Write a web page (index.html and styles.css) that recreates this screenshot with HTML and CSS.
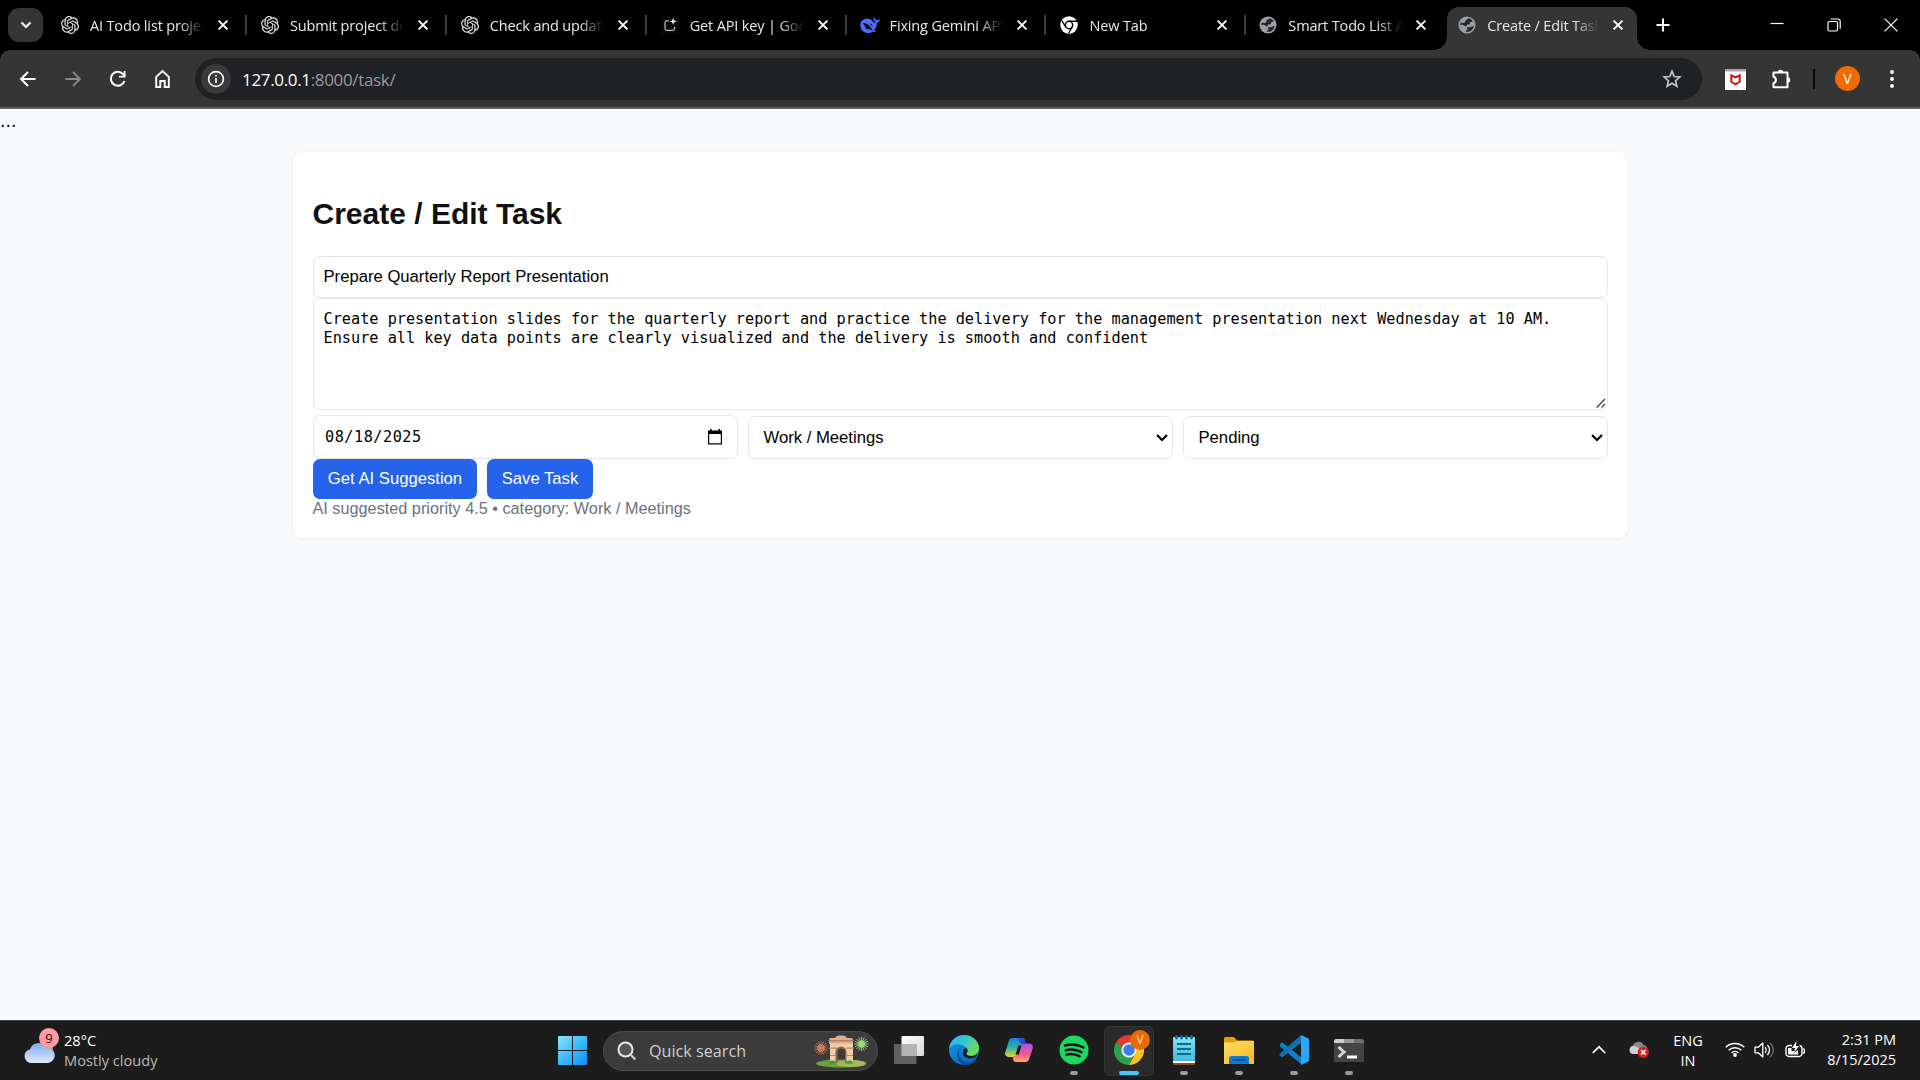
FILE: index.html
```html
<!DOCTYPE html>
<html lang="en">
<head>
<meta charset="utf-8">
<title>Create / Edit Task</title>
<link rel="stylesheet" href="styles.css">
</head>
<body>
<svg class="defs" width="0" height="0">
  <defs>
    <symbol id="knot" viewBox="0 0 24 24"><path fill="#e8e8e8" d="M22.28 9.82a5.98 5.98 0 0 0-.52-4.91 6.05 6.05 0 0 0-6.51-2.9A6.07 6.07 0 0 0 4.98 4.18a5.98 5.98 0 0 0-4 2.9 6.05 6.05 0 0 0 .74 7.1 5.98 5.98 0 0 0 .51 4.91 6.05 6.05 0 0 0 6.52 2.9A5.98 5.98 0 0 0 13.26 24a6.06 6.06 0 0 0 5.77-4.21 5.99 5.99 0 0 0 4-2.9 6.06 6.06 0 0 0-.75-7.07zm-9.02 12.61a4.48 4.48 0 0 1-2.88-1.04l.14-.08 4.78-2.76a.8.8 0 0 0 .39-.68v-6.74l2.02 1.17a.07.07 0 0 1 .04.05v5.58a4.5 4.5 0 0 1-4.49 4.5zM3.6 18.3a4.47 4.47 0 0 1-.54-3.01l.14.09 4.78 2.76a.77.77 0 0 0 .78 0l5.84-3.37v2.33a.08.08 0 0 1-.03.06L9.74 19.95a4.5 4.5 0 0 1-6.14-1.65zM2.34 7.9a4.49 4.49 0 0 1 2.37-1.98v5.68a.77.77 0 0 0 .39.68l5.81 3.35-2.02 1.17a.08.08 0 0 1-.07 0l-4.83-2.79A4.5 4.5 0 0 1 2.34 7.87zm16.6 3.86-5.84-3.39L15.12 7.2a.08.08 0 0 1 .07 0l4.83 2.79a4.49 4.49 0 0 1-.68 8.1v-5.68a.79.79 0 0 0-.4-.65zm2.01-3.03-.14-.08-4.77-2.78a.78.78 0 0 0-.79 0L9.41 9.23V6.9a.07.07 0 0 1 .03-.06l4.83-2.79a4.5 4.5 0 0 1 6.68 4.66zM8.31 12.86l-2.02-1.16a.08.08 0 0 1-.04-.06V6.07a4.5 4.5 0 0 1 7.38-3.45l-.15.08L8.7 5.46a.8.8 0 0 0-.39.68zm1.1-2.36 2.6-1.5 2.6 1.5v3l-2.6 1.5-2.6-1.5z"/></symbol>
    <symbol id="close" viewBox="0 0 12 12"><path d="M1.6 1.6l8.8 8.8M10.4 1.6l-8.8 8.8" stroke="#fff" stroke-width="1.9" fill="none"/></symbol>
    <symbol id="globe" viewBox="0 0 20 20"><circle cx="10" cy="10" r="9.500" fill="#9aa0a6"/><path fill="#26282a" d="M11.500 2.600c2 .3 3.800 1.500 4.900 3.200-.9.900-1.900.4-2.600 1-.8.700.1 1.600-.9 2.300-.8.500-1.700-.1-2.500.3-.9.500-.2 1.500-1 1.900-1 .5-2.100-.7-3.500-1.300C4.600 9.400 3.500 9.600 2.300 10c.1-1 .3-1.900.7-2.700 1.500.2 2.700.7 3.900.2 1.400-.6.700-2 1.700-2.900.9-.8 2.300-.7 2.900-2zM10.200 12.300c1.300-.4 1.900.4 3 .3 1.500-.2 1.900-1.600 4.400-1.500-.4 3-2.700 5.600-5.700 6.400-1.200.2-2.400.2-3.500-.2.300-1.300 1.500-1 2-2 .4-1-.6-1.900-.2-3z"/></symbol>
    <symbol id="caret" viewBox="0 0 14 10"><path d="M2 2l5 5 5-5" fill="none" stroke="#000" stroke-width="2.200"/></symbol>
    <linearGradient id="win" x1="0" y1="0" x2="1" y2="1"><stop offset="0" stop-color="#8be6ff"/><stop offset=".5" stop-color="#3cbcfb"/><stop offset="1" stop-color="#0c8ef5"/></linearGradient>
    <linearGradient id="cloud" x1="0" y1="0" x2="0" y2="1"><stop offset="0" stop-color="#7fa9ee"/><stop offset="1" stop-color="#e0ebfb"/></linearGradient>
    <linearGradient id="edgeA" x1="0" y1="0" x2="1" y2=".6"><stop offset="0" stop-color="#2fb0ee"/><stop offset=".5" stop-color="#35c4d4"/><stop offset="1" stop-color="#6fe052"/></linearGradient>
    <linearGradient id="edgeB" x1="0" y1="0" x2="1" y2="1"><stop offset="0" stop-color="#1797e8"/><stop offset="1" stop-color="#0a5ab4"/></linearGradient>
    <linearGradient id="copA" x1="0" y1="0" x2="0" y2="1"><stop offset="0" stop-color="#1b7fe6"/><stop offset=".5" stop-color="#27b6a4"/><stop offset="1" stop-color="#f2d428"/></linearGradient>
    <linearGradient id="copB" x1="0" y1="0" x2="0" y2="1"><stop offset="0" stop-color="#a453ee"/><stop offset=".6" stop-color="#ee5b8d"/><stop offset="1" stop-color="#ffae68"/></linearGradient>
    <linearGradient id="pad" x1="0" y1="0" x2="0" y2="1"><stop offset="0" stop-color="#86e2f2"/><stop offset="1" stop-color="#3fb3d6"/></linearGradient>
    <linearGradient id="fold" x1="0" y1="0" x2="1" y2="1"><stop offset="0" stop-color="#ffdc6a"/><stop offset="1" stop-color="#f8ba17"/></linearGradient>
    <linearGradient id="tv" x1="0" y1="0" x2="1" y2="1"><stop offset="0" stop-color="#fff"/><stop offset="1" stop-color="#d8d8d8"/></linearGradient>
  </defs>
</svg>

<header class="tabstrip">
  <button class="tab-search"><svg width="14" height="10" viewBox="0 0 14 10"><path d="M2.500 2.500L7 7l4.500-4.500" fill="none" stroke="#fff" stroke-width="2.200"/></svg></button>
  <nav class="tabs">
    <div class="tab"><svg class="fav"><use href="#knot"/></svg><span class="label">AI Todo list project</span><svg class="x"><use href="#close"/></svg></div>
    <div class="tab"><svg class="fav"><use href="#knot"/></svg><span class="label">Submit project details</span><svg class="x"><use href="#close"/></svg></div>
    <div class="tab"><svg class="fav"><use href="#knot"/></svg><span class="label">Check and update</span><svg class="x"><use href="#close"/></svg></div>
    <div class="tab"><svg class="fav" viewBox="0 0 20 20"><rect width="20" height="20" fill="#080808"/><path d="M9 5.500H6.500a2 2 0 0 0-2 2V14a2 2 0 0 0 2 2H13a2 2 0 0 0 2-2v-2" fill="none" stroke="#bbb" stroke-width="1.400"/><path d="M13.500 2l1 3 3 1-3 1-1 3-1-3-3-1 3-1z" fill="#fff"/></svg><span class="label">Get API key | Google</span><svg class="x"><use href="#close"/></svg></div>
    <div class="tab"><svg class="fav whale" viewBox="0 0 20 20"><path fill="#4d6bfe" d="M19.700 4c-1.300.5-1.700 1.300-3.200 1C15 4.500 14.800 2.600 13.500 2c-.3 2 .3 3.500 1.300 4.500.6.600.3 1.500.1 2.100-1.700-1.200-2.500-3.700-5-4.400C5.500 3 .7 5 .3 9.500c-.4 4.800 3.500 8.600 8 8.500 2 0 3.500-.5 4.700-1.500.8.500 2.200.6 3 .1-.5-.5-1.200-.7-1.700-1.400 2-2.400 2.200-4.500 2.400-7.200 2-.6 3.100-2 3-4z"/><path fill="#000" d="M3 8c3-.4 6 2 7.500 4.500.8 1.200 1.500 1.800 2.200 2.200-1.700.6-3-.1-3.800-1.100-.5.800-1.400.8-2 .3C5 12.500 4.600 9.800 3 8zm7 .8c1.300-.4 2.700.7 2.600 2.300-1-.2-1.900-1.200-2.600-2.300z"/></svg><span class="label">Fixing Gemini API</span><svg class="x"><use href="#close"/></svg></div>
    <div class="tab"><svg class="fav" viewBox="0 0 20 20"><circle cx="10" cy="10" r="9.700" fill="#fff"/><circle cx="10" cy="10" r="4.900" fill="#000"/><circle cx="10" cy="10" r="3.200" fill="#fff"/><path d="M10 5.800h9M6.300 12.200L2 5M13.600 12.200L9.500 19.200" stroke="#000" stroke-width="1.500"/></svg><span class="label">New Tab</span><svg class="x"><use href="#close"/></svg></div>
    <div class="tab"><svg class="fav"><use href="#globe"/></svg><span class="label">Smart Todo List App</span><svg class="x"><use href="#close"/></svg></div>
    <div class="tab active"><svg class="fav"><use href="#globe"/></svg><span class="label">Create / Edit Task</span><svg class="x"><use href="#close"/></svg></div>
  </nav>
  <svg class="newtab" width="14" height="14" viewBox="0 0 14 14"><path d="M7 .5v13M.5 7h13" stroke="#fff" stroke-width="2"/></svg>
  <div class="winctl">
    <svg width="14" height="14" viewBox="0 0 14 14"><path d="M.5 5.500h13" stroke="#fff" stroke-width="1.200"/></svg>
    <svg width="14" height="14" viewBox="0 0 14 14"><rect x="1" y="3.500" width="9.500" height="9.500" rx="1.500" fill="none" stroke="#fff" stroke-width="1.200"/><path d="M3.500 1h7.500a2.200 2.200 0 0 1 2.200 2.200v7.500" fill="none" stroke="#fff" stroke-width="1.200"/></svg>
    <svg width="14" height="14" viewBox="0 0 14 14"><path d="M.6.6l12.800 12.800M13.400.6L.6 13.400" stroke="#fff" stroke-width="1.200"/></svg>
  </div>
</header>

<div class="toolbar-wrap">
<div class="toolbar">
  <div class="navicons">
    <svg viewBox="0 0 20 20"><path d="M17.500 10H3.200M10 3L3 10l7 7" fill="none" stroke="#fff" stroke-width="2"/></svg>
    <svg viewBox="0 0 20 20"><path d="M2.500 10h14.300M10 3l7 7-7 7" fill="none" stroke="#8a8a8a" stroke-width="1.800"/></svg>
    <svg viewBox="0 0 20 20"><path d="M16.500 12A7 7 0 1 1 15 5l2 2" fill="none" stroke="#fff" stroke-width="2"/><path d="M17.500 2v6.500H11V6.700h4.700V2z" fill="#fff"/></svg>
    <svg viewBox="0 0 20 20"><path d="M3.200 18V7.800L9.500 2l6.300 5.800V18H11.700v-6H7.300v6z" fill="none" stroke="#fff" stroke-width="1.900"/></svg>
  </div>
  <div class="omnibox">
    <span class="info"><svg width="18" height="18" viewBox="0 0 18 18"><circle cx="9" cy="9" r="7.400" fill="none" stroke="#fff" stroke-width="1.600"/><path d="M9 8v5M9 4.800v1.700" stroke="#fff" stroke-width="1.600"/></svg></span>
    <span class="url">127.0.0.1<span class="path">:8000/task/</span></span>
    <svg class="star" width="20" height="20" viewBox="0 0 20 20"><path d="M10 2.200l2.200 5.300 5.700.5-4.300 3.700 1.300 5.600L10 14.300l-4.900 3 1.300-5.600L2.100 8l5.700-.5z" fill="none" stroke="#c4c6c8" stroke-width="1.700"/></svg>
  </div>
  <svg class="shield" width="21" height="21" viewBox="0 0 21 21"><path d="M0 0h21v21H0z" fill="#fff"/><path d="M0 0h21v2.500H0z" fill="#a9a4a4"/><path d="M6.300 6.300l4.200 2 4.200-2v6.500l-4.200 2.600-4.200-2.600z" fill="none" stroke="#c01818" stroke-width="2"/></svg>
  <svg class="puzzle" width="24" height="24" viewBox="0 0 24 24"><path d="M4.500 5.500h14v14.800h-14v-4a3.400 3.400 0 0 0 0-6.500z" fill="none" stroke="#fff" stroke-width="2" stroke-linejoin="round"/><path d="M8.800 5.500a2.700 2.700 0 0 1 5.400 0zM18.500 10.300a2.700 2.700 0 0 1 0 5.400z" fill="#fff"/></svg>
  <span class="vbar"></span>
  <span class="avatar">V</span>
  <svg class="dots" width="4" height="18" viewBox="0 0 4 18"><path d="M2 2h0M2 9h0M2 16h0" stroke="#fff" stroke-width="3.800" stroke-linecap="round"/></svg>
</div>
</div>

<main class="page">
  <div class="stray">...</div>
  <section class="card">
    <h1>Create / Edit Task</h1>
    <input class="field title" value="Prepare Quarterly Report Presentation">
    <div class="area-wrap">
      <textarea class="field area" spellcheck="false">Create presentation slides for the quarterly report and practice the delivery for the management presentation next Wednesday at 10 AM.
Ensure all key data points are clearly visualized and the delivery is smooth and confident</textarea>
      <svg class="grip" width="10" height="10" viewBox="0 0 10 10"><path d="M.7 9.500L9 1M5.500 9.500L9 6" stroke="#444" stroke-width="1.300"/></svg>
    </div>
    <div class="row">
      <div class="field date"><span>08/18/2025</span><svg width="14" height="16" viewBox="0 0 14 16"><path d="M0 1.500h2V0h1.600v1.500h6.800V0H12v1.500h2V15.500H0zM1.200 5v9.300h11.600V5z" fill="#000"/></svg></div>
      <div class="field select"><span>Work / Meetings</span><svg width="14" height="10"><use href="#caret"/></svg></div>
      <div class="field select"><span>Pending</span><svg width="14" height="10"><use href="#caret"/></svg></div>
    </div>
    <div class="actions"><button class="btn ai">Get AI Suggestion</button><button class="btn save">Save Task</button></div>
    <p class="hint">AI suggested priority 4.5 • category: Work / Meetings</p>
  </section>
</main>

<footer class="taskbar">
  <div class="weather">
    <div class="wicon">
      <svg width="34" height="36" viewBox="0 0 34 36"><circle cx="23" cy="20" r="6" fill="#f58220"/><path d="M7 35a7 7 0 0 1-1-13.800A8.800 8.800 0 0 1 22 19.500a7.800 7.800 0 0 1 2 15.500z" fill="url(#cloud)"/></svg>
      <span class="count">9</span>
    </div>
    <div class="wtext"><span>28°C</span><span class="dim">Mostly cloudy</span></div>
  </div>
  <div class="dock">
    <svg class="start" width="29" height="29" viewBox="0 0 29 29"><path d="M0 1a1 1 0 0 1 1-1h13v14H0zM15 0h13a1 1 0 0 1 1 1v13H15zM0 15h14v14H1a1 1 0 0 1-1-1zM15 15h14v13a1 1 0 0 1-1 1H15z" fill="url(#win)"/></svg>
    <div class="search">
      <svg width="20" height="20" viewBox="0 0 20 20"><circle cx="8.500" cy="8.500" r="7" fill="#555" stroke="#e8e8e8" stroke-width="2"/><path d="M13.500 13.500l4.800 5" stroke="#ccc" stroke-width="2.400"/></svg>
      <span>Quick search</span>
      <svg class="gate" width="56" height="34" viewBox="0 0 56 34">
        <ellipse cx="28" cy="29.500" rx="25" ry="4" fill="#6c9f3e"/><ellipse cx="38" cy="29.500" rx="15" ry="3.500" fill="#a4b955"/>
        <path d="M16 6l1-2h5c1-2 3-2.500 6-2.500S33 2 34 4h5l1 2v4H16z" fill="#d9b08c"/><path d="M15.500 6h25v1.500h-25z" fill="#b58560"/><path d="M17 9.500h23V29h-7V18a4.500 4.500 0 0 0-9 0v11h-7z" fill="#efcda8"/><path d="M16 13.500h8v1.300h-8zM33 13.500h8v1.300h-8zM17 21h6v1h-6zM34 21h6v1h-6z" fill="#b98c66"/><path d="M22.500 29V18a5.500 5.500 0 0 1 11 0v11H32V18.500a3.500 3.500 0 0 0-7.500 0V29z" fill="#8e6248"/>
        <path d="M15.500 29.500c1-4 7-4 8 0zM32.500 29.500c1-4 7-4 8 0z" fill="#3f9a33"/>
        <circle cx="8" cy="14" r="3.500" fill="#c87b58"/><path d="M8 7v14M1 14h14M3 9l10 10M13 9L3 19M5.300 7.500l5.400 13M10.700 7.500l-5.400 13M1.500 11.300l13 5.400M14.500 11.300l-13 5.400" stroke="#cd7c58" stroke-width=".9"/>
        <circle cx="48.500" cy="10" r="3.500" fill="#8fd36a"/><path d="M48.500 3v14M41.500 10h14M43.500 5l10 10M53.500 5l-10 10M45.800 3.500l5.400 13M51.200 3.500l-5.400 13M42 7.300l13 5.400M55 7.300l-13 5.400" stroke="#9bdc76" stroke-width=".9"/>
      </svg>
    </div>
    <div class="app"><svg width="30" height="28" viewBox="0 0 30 28"><rect x="7.500" width="22.500" height="20" rx="1" fill="url(#tv)"/><rect y="8" width="22.500" height="20" rx="1" fill="#6d6d6d" fill-opacity=".85"/><rect x="7.500" y="8" width="15" height="12" fill="#b4b4b4"/></svg></div>
    <div class="app"><svg width="30" height="30" viewBox="0 0 30 30"><circle cx="15" cy="15" r="15" fill="url(#edgeB)"/><path d="M0 14C1 5 8 0 15 0c9 0 15 6.500 15 13 0 5-4 8-8 8-3.500 0-5-1.600-4.400-2.800 1.400-1.600 1-3.800.2-5C15.500 9 3 7 0 14z" fill="url(#edgeA)"/><path d="M10 16c-1 6 4 12 11 11.500 3-.2 4.500-1.200 6.500-2.800C25 28 21 30 16 30 9 29 5 19 12.500 11.500 11 13 10.200 14 10 16z" fill="#0b4e9c"/><path d="M17.600 18.200c-.6 1.200.9 2.800 4.400 2.800 2 0 4.500-.6 6.300-2.500-.5 3-2.800 4.500-5.800 5-5 .6-9-2.500-8.500-6.500.1-2.200 1.500-3.700 3.500-4 1.200 1.500 1.500 3.600.1 5.200z" fill="#1d1d1d"/></svg></div>
    <div class="app"><svg width="28" height="26" viewBox="0 0 28 26"><path d="M8 1h9c2 0 2.500 1 3 3l.7 3c-4 0-5 1-6 4l-2 6c-.8 2-1.500 3-3.500 3H4c-3 0-4.500-2-3.700-5L3.500 5C4.200 2.500 5.500 1 8 1z" fill="url(#copA)"/><path d="M20 25h-9c-2 0-2.500-1-3-3l-.5-2.500c4 0 5-1 6-4l2-6c.8-2 1.500-3 3.500-3h5c3 0 4.500 2 3.700 5L24.500 21c-.7 2.500-2 4-4.500 4z" fill="url(#copB)"/><path d="M13 1h4c2 0 2.500 1 3 3l.7 3h-3C15 7 14 4 13 1z" fill="#2450d0"/><path d="M13.200 8.500h3.300l-2.700 9h-3.300z" fill="#1d1d1d"/></svg></div>
    <div class="app run"><svg width="30" height="30" viewBox="0 0 30 30"><circle cx="15" cy="15" r="14.500" fill="#1ed760"/><path d="M6 10.500c6-1.800 13-1.200 18.500 2M6.800 15.300c5.200-1.500 11-.9 15.700 1.900M7.500 19.600c4.500-1.200 9-.7 13 1.700" fill="none" stroke="#121212" stroke-width="2.500" stroke-linecap="round"/></svg></div>
    <div class="app current"><svg width="30" height="30" viewBox="0 0 30 30"><path d="M15 15L2 7.500A15 15 0 0 1 28 7.500H15z" fill="#e33b2e"/><path d="M15 15L2 7.500A15 15 0 0 0 15 30l6.500-11.200z" fill="#2da04c"/><path d="M15 15l6.500 3.700L15 30A15 15 0 0 0 28 7.500H15z" fill="#fcc31e"/><circle cx="15" cy="15" r="7.500" fill="#fff"/><circle cx="15" cy="15" r="5.800" fill="#3b7ded"/></svg><span class="badge">V</span></div>
    <div class="app run"><svg width="22" height="30" viewBox="0 0 22 30"><rect y="2" width="22" height="26" rx="1" fill="url(#pad)"/><path d="M0 26h22v2H0z" fill="#fff"/><path d="M0 28h22v2H0z" fill="#8f4a14"/><path d="M3.500 1.500v1.500M8.500 1.500v1.500M13.500 1.500v1.500M18.500 1.500v1.500" stroke="#0d6f96" stroke-width="2.800" stroke-linecap="round"/><path d="M4 9h14M4 14h14M4 19h14" stroke="#086b91" stroke-width="2"/></svg></div>
    <div class="app run"><svg width="30" height="27" viewBox="0 0 30 27"><path d="M0 1.500A1.500 1.500 0 0 1 1.500 0H10l3 3.500h15.500A1.500 1.500 0 0 1 30 5v7H0z" fill="#dfa008"/><path d="M0 5.500h10l3-1.500h17v23H0z" fill="url(#fold)"/><path d="M5 27v-5.500a2.500 2.500 0 0 1 2.500-2.500h15a2.500 2.500 0 0 1 2.500 2.500V27z" fill="#1379ce"/><path d="M8.500 23h13" stroke="#0a4c92" stroke-width="1.500"/></svg></div>
    <div class="app run"><svg width="30" height="30" viewBox="0 0 30 30"><path d="M1 9l2-1.700L22 22v7L1 11.500z" fill="#0b82cd"/><path d="M22 0v8L3 22.500 1 21c-.7-.8-.7-1.700 0-2.500z" fill="#1070b3"/><path d="M22 0l7 3.200a2 2 0 0 1 1 1.800v20a2 2 0 0 1-1 1.800L22 30z" fill="#2aa7f2"/></svg></div>
    <div class="app run"><svg width="30" height="23" viewBox="0 0 30 23"><rect width="30" height="23" rx="1.500" fill="#444"/><path d="M1.500 0H10v4H0V1.500z" fill="#ccc"/><path d="M10 0h10v4H10z" fill="#999"/><path d="M20 0h8.500L30 1.500V4H20z" fill="#707070"/><path d="M4.500 8l5.500 5-5.500 5" fill="none" stroke="#d8d8d8" stroke-width="3"/><path d="M13 18h10" stroke="#fff" stroke-width="3"/></svg></div>
  </div>
  <div class="tray">
    <svg class="up" width="14" height="9" viewBox="0 0 14 9"><path d="M.8 8L7 1.800 13.200 8" fill="none" stroke="#fff" stroke-width="1.700"/></svg>
    <svg class="drive" width="20" height="17" viewBox="0 0 20 17"><path d="M4 13a4 4 0 0 1-.5-7.900A6 6 0 0 1 14.500 4a4.600 4.600 0 0 1 .5 9z" fill="#8a8a8a"/><path d="M4 13a4 4 0 0 1 .5-7.900c2 0 3.500 1 5.500 2.500V13z" fill="#cfcfcf"/><circle cx="14.300" cy="11.300" r="5.600" fill="#d8202a"/><path d="M12 9l4.600 4.600M16.600 9L12 13.600" stroke="#fff" stroke-width="1.500"/></svg>
    <div class="lang"><span>ENG</span><span>IN</span></div>
    <svg class="wifi" width="20" height="15" viewBox="0 0 20 15"><path d="M.7 5.300a13.200 13.200 0 0 1 18.600 0M3.600 8.300a9 9 0 0 1 12.800 0M6.500 11a5 5 0 0 1 7 0" fill="none" stroke="#fff" stroke-width="1.500"/><circle cx="10" cy="13" r="1.900" fill="#fff"/></svg>
    <svg class="vol" width="20" height="18" viewBox="0 0 20 18"><path d="M1 6.200h3.300L8.800 2v14l-4.500-4.200H1z" fill="none" stroke="#fff" stroke-width="1.300" stroke-linejoin="round"/><path d="M11 6.200a4 4 0 0 1 0 5.600M13.400 4a7 7 0 0 1 0 10" fill="none" stroke="#fff" stroke-width="1.300"/><path d="M16 1.700a10 10 0 0 1 0 14.600" fill="none" stroke="#666" stroke-width="1.300"/></svg>
    <svg class="bat" width="20" height="18" viewBox="0 0 20 18"><path d="M7 4.500H4A3 3 0 0 0 1 7.500v5a3 3 0 0 0 3 3h10a3 3 0 0 0 3-3v-5a3 3 0 0 0-2.500-3" fill="none" stroke="#fff" stroke-width="1.400"/><path d="M3 7h3.500v3H9v2l4-3v4.500H4a1 1 0 0 1-1-1z" fill="#fff"/><path d="M11.500 0L7 7h3l-1 5 5-7h-3z" fill="#fff"/><path d="M18.200 7.500a3 3 0 0 1 0 5" stroke="#fff" stroke-width="1.400" fill="none"/></svg>
    <div class="clock"><span>2:31 PM</span><span>8/15/2025</span></div>
  </div>
</footer>
</body>
</html>
```
FILE: styles.css
```css
* { box-sizing: border-box; }
body {
  margin: 0; width: 1920px; height: 1080px; overflow: hidden;
  display: flex; flex-direction: column;
  background: #f9fafc; font-family: "Open Sans", "Noto Sans", sans-serif;
}
svg { display: block; flex: none; }
.defs { position: absolute; }
button { border: 0; padding: 0; margin: 0; }

/* tab strip */
.tabstrip { height: 50px; background: #000; display: flex; align-items: center; flex: none; }
.tab-search { margin-left: 8px; width: 35px; height: 34px; border-radius: 11px; background: #353535; display: flex; align-items: center; justify-content: center; }
.tabs { display: flex; align-self: stretch; margin-left: 5px; padding-top: 7px; }
.tab { position: relative; width: 199.900px; height: 43px; padding: 0 17px 0 13px; display: flex; align-items: center; color: #e9e9e9; font-size: 14.500px; letter-spacing: -.15px; }
.tab:not(.active) { padding-bottom: 7px; }
.tab:nth-child(-n+6)::after { content: ""; position: absolute; right: 1px; top: 8px; width: 2px; height: 20px; background: #3c3c3c; }
.fav { width: 18px; height: 18px; margin-right: 11px; }
.whale { width: 20px; height: 20px; margin: 0 10px 0 -1px; }
.label { flex: 1; overflow: hidden; white-space: nowrap; margin-right: 13px; padding-top: 1px; line-height: 22px; -webkit-mask-image: linear-gradient(90deg, #000 78%, transparent); mask-image: linear-gradient(90deg, #000 78%, transparent); }
.x { width: 12px; height: 12px; margin-right: 2px; }
.tab:nth-child(7) { padding-left: 12px; padding-right: 18px; }
.tab.active { width: 190px; padding: 0 11px 7px 11px; background: #353535; border-radius: 12px 12px 0 0; }
.tab.active::before, .tab.active::after { content: ""; position: absolute; bottom: 0; width: 13px; height: 13px; }
.tab.active::before { left: -13px; background: radial-gradient(circle at 0 0, transparent 12.500px, #353535 13px); }
.tab.active::after { right: -13px; background: radial-gradient(circle at 100% 0, transparent 12.500px, #353535 13px); }
.newtab { margin-left: 19px; }
.winctl { margin-left: auto; margin-right: 22px; display: flex; gap: 43px; }

/* toolbar */
.toolbar-wrap { background: #000; flex: none; }
.toolbar { height: 59px; background: #353535; border-bottom: 2px solid #5f5f5f; border-radius: 10px 10px 0 0; display: flex; align-items: center; }
.navicons { display: flex; gap: 25px; margin-left: 18px; }
.navicons svg { width: 20px; height: 20px; }
.omnibox { width: 1507px; height: 42px; margin-left: 22px; border-radius: 21px; background: #202124; display: flex; align-items: center; padding: 0 20px 0 6px; }
.info { width: 30px; height: 30px; border-radius: 50%; background: #3a3a3b; display: flex; align-items: center; justify-content: center; }
.url { margin-left: 11px; padding-top: 1px; font-size: 17px; color: #fff; letter-spacing: -.34px; }
.path { color: #9a9b9d; }
.star { margin-left: auto; }
.shield { margin-left: 23px; margin-top: 1px; }
.puzzle { margin-left: 23px; }
.vbar { width: 2px; height: 20px; background: #080808; margin-left: 20px; }
.avatar { width: 25px; height: 25px; border-radius: 50%; background: #ee6c00; color: #fff; font-size: 14px; display: flex; align-items: center; justify-content: center; margin-left: 20px; }
.dots { margin-left: 30px; }

/* page */
.page { flex: 1; font-family: "Liberation Sans", Arial, sans-serif; color: #111; min-height: 0; }
.stray { height: 43px; font-size: 20px; line-height: 23px; }
.card { width: 1335px; height: 386px; margin-left: 293px; padding: 20px; background: #fff; border-radius: 10px; box-shadow: 0 1px 4px rgba(0, 0, 0, .06); }
.card h1 { margin: 24px 0 24px -.5px; font-size: 30px; line-height: 36px; font-weight: 700; }
.field { display: block; width: 100%; border: 1px solid #e5e7eb; border-radius: 7px; background: #fff; color: #000; font-size: 16.670px; outline: 0; }
.title { height: 42px; padding: 0 9.500px; font-family: inherit; }
.area-wrap { position: relative; }
.area { height: 112px; padding: 11px 9.500px 0; margin-bottom: 5px; resize: none; overflow: hidden; font-family: "DejaVu Sans Mono", monospace; font-size: 15.220px; line-height: 19px; }
.grip { position: absolute; right: 2px; bottom: 2px; }
.row { display: grid; grid-template-columns: 1fr 1fr 1fr; gap: 10px; align-items: end; }
.date, .select { display: flex; align-items: center; justify-content: space-between; }
.date { height: 44px; padding: 0 15px 0 11px; font-family: "DejaVu Sans Mono", monospace; font-size: 15.220px; letter-spacing: .5px; }
.select { height: 43px; padding: 0 3px 0 14.500px; }
.actions { display: flex; gap: 10px; }
.btn { height: 40px; border-radius: 7px; background: #2563eb; color: #fff; font-family: inherit; font-size: 16.670px; }
.ai { width: 164px; }
.save { width: 106px; }
.hint { margin: 0 0 0 -.5px; font-size: 16.250px; line-height: 19px; color: #6b7280; }

/* taskbar */
.taskbar { height: 60px; flex: none; background: #1c1c1c; border-top: 1px solid #454749; display: flex; align-items: flex-start; color: #fff; font-size: 15px; position: relative; }
.weather { display: flex; width: 558px; padding: 7px 0 0 24px; }
.wicon { position: relative; width: 36px; height: 36px; }
.count { position: absolute; left: 15px; top: 0; width: 20px; height: 20px; border-radius: 50%; background: #ff99a4; color: #111; font-size: 13px; line-height: 20px; text-align: center; }
.wtext { display: flex; flex-direction: column; margin-left: 4px; margin-top: 2px; line-height: 20px; font-size: 14.600px; white-space: nowrap; }
.dim { color: #b9b9b9; }
.dock { display: flex; height: 59px; align-items: center; }
.search { width: 275px; height: 40px; margin: 0 6px 0 16px; border-radius: 20px; border: 1px solid #4f4f4f; background: #3b3b3b; display: flex; align-items: center; padding: 0 8px 0 13px; color: #cfcfcf; font-size: 16.200px; }
.search span { margin-left: 12px; white-space: nowrap; }
.gate { margin-left: auto; }
.app { position: relative; width: 50px; height: 50px; margin-right: 5px; display: flex; align-items: center; justify-content: center; border-radius: 6px; }
.app > svg { position: relative; top: -.5px; }
.run::after, .current::after { content: ""; position: absolute; bottom: 1px; left: 21px; width: 8px; height: 4px; border-radius: 2px; background: #9a9a9a; }
.current { background: #2a2a2a; border: 1px solid #353535; }
.current::after { bottom: 0; left: 14px; width: 20px; background: #4cc2ff; }
.badge { position: absolute; right: 3px; top: 3px; width: 20px; height: 20px; border-radius: 50%; background: #e86a06; color: #ffd9b8; font-size: 12px; line-height: 20px; text-align: center; }
.tray { display: flex; height: 59px; align-items: center; margin-left: auto; margin-right: 24px; white-space: nowrap; line-height: 20px; font-size: 14.500px; }
.tray > svg { margin-top: -2px; }
.drive { margin-left: 23px; }
.lang { width: 40px; margin-left: 19px; display: flex; flex-direction: column; align-items: center; }
.wifi { margin-left: 17px; }
.vol { margin-left: 9px; }
.bat { margin-left: 11px; }
.clock { width: 91px; margin-top: -1px; display: flex; flex-direction: column; align-items: flex-end; }
```
